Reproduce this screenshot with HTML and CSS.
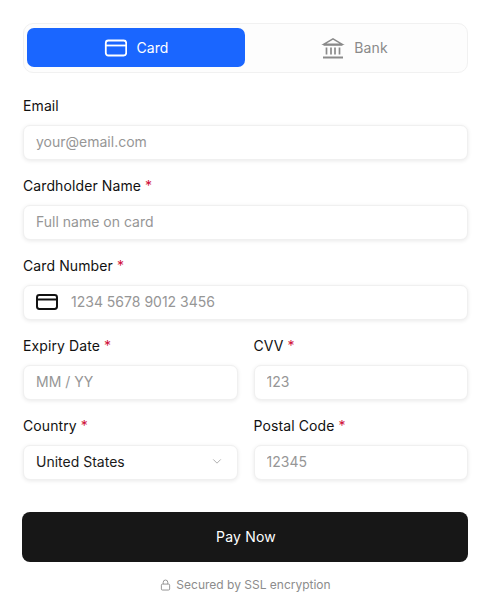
FILE: index.html
```html
<!DOCTYPE html>
<html lang="en">
<head>
    <meta charset="UTF-8">
    <meta name="viewport" content="width=device-width, initial-scale=1.0">
    <title>Payment</title>
    <link rel="stylesheet" href="styles.css">
</head>
<body>
    <form class="checkout">
        <div class="tabs">
            <button type="button" class="tab active">
                <svg class="tab-icon" viewBox="0 0 24 24" fill="none" stroke="currentColor" stroke-width="1.8">
                    <rect x="2.8" y="4.5" width="20.4" height="15" rx="2.5"/>
                    <path d="M2.8 9.5h20.4"/>
                </svg>
                Card
            </button>
            <button type="button" class="tab">
                <svg class="tab-icon bank" viewBox="0 0 24 24" fill="none" stroke="currentColor" stroke-width="1.5">
                    <path d="M3 8.2 12 2.8l9 5.4z"/>
                    <path d="M2.5 9h19" stroke-width="1.6"/>
                    <path d="M5.5 11.5v7M10 11.5v7M14 11.5v7M18.5 11.5v7" stroke-width="1.7"/>
                    <path d="M2 21.5h20" stroke-width="2"/>
                </svg>
                Bank
            </button>
        </div>

        <div class="field">
            <label class="label">Email</label>
            <input class="input" type="text" placeholder="your@email.com">
        </div>

        <div class="field">
            <label class="label">Cardholder Name <span class="req">*</span></label>
            <input class="input" type="text" placeholder="Full name on card">
        </div>

        <div class="field">
            <label class="label">Card Number <span class="req">*</span></label>
            <div class="input input-icon">
                <svg class="card-icon" viewBox="0 0 22 16" fill="none" stroke="#111" stroke-width="2">
                    <rect x="1" y="1" width="20" height="14" rx="2.4"/>
                    <path d="M1 5.5h20"/>
                </svg>
                <input class="bare" type="text" placeholder="1234 5678 9012 3456">
            </div>
        </div>

        <div class="row">
            <div class="field">
                <label class="label">Expiry Date <span class="req">*</span></label>
                <input class="input" type="text" placeholder="MM / YY">
            </div>
            <div class="field">
                <label class="label">CVV <span class="req">*</span></label>
                <input class="input" type="text" placeholder="123">
            </div>
        </div>

        <div class="row">
            <div class="field">
                <label class="label">Country <span class="req">*</span></label>
                <div class="input select">
                    <span>United States</span>
                    <svg class="chevron" viewBox="0 0 12 8" fill="none" stroke="#b0b0b0" stroke-width="1.2">
                        <path d="M1.5 1.5 6 6l4.5-4.5"/>
                    </svg>
                </div>
            </div>
            <div class="field">
                <label class="label">Postal Code <span class="req">*</span></label>
                <input class="input" type="text" placeholder="12345">
            </div>
        </div>

        <button type="button" class="pay">Pay Now</button>

        <p class="secure">
            <svg class="lock" viewBox="0 0 12 13" fill="none" stroke="#8c8c8c" stroke-width="1">
                <rect x="1.5" y="5.5" width="9" height="6.5" rx="1.2"/>
                <path d="M3.5 5.5V3.6a2.5 2.5 0 0 1 5 0v1.9"/>
            </svg>
            Secured by SSL encryption
        </p>
    </form>
</body>
</html>
```

FILE: styles.css
```css
* {
    box-sizing: border-box;
}
body {
    margin: 0;
    background-color: #fff;
    font-family: Inter, "Liberation Sans", sans-serif;
    color: #1a1a1a;
}
.checkout {
    width: 491px;
    padding: 23px 23px 0 23px;
}
.tabs {
    display: flex;
    height: 50px;
    padding: 4px 0 5px 3px;
    background-color: #fdfdfd;
    border: 1px solid #f1f1f1;
    border-radius: 10px;
    margin-bottom: 24px;
}
.tab {
    flex: 1;
    display: flex;
    align-items: center;
    justify-content: center;
    gap: 9px;
    padding: 0 3px 0 0;
    border: none;
    background: none;
    border-radius: 7px;
    font-family: inherit;
    font-size: 14px;
    font-weight: 400;
    letter-spacing: 0.1px;
    color: #8a8a8a;
}
.tab.active {
    flex: 0 0 218px;
    padding: 0;
    background-color: #1a66ff;
    color: #fff;
}
.tab-icon {
    width: 24px;
    height: 24px;
}
.field {
    flex: 1;
    min-width: 0;
    display: flex;
    flex-direction: column;
    margin-bottom: 17px;
}
.label {
    height: 20px;
    margin-bottom: 8px;
    font-size: 14px;
    font-weight: 400;
    line-height: 18px;
    letter-spacing: 0.1px;
    color: #111;
}
.req {
    color: #d0103a;
}
.input {
    width: 100%;
    height: 35px;
    padding: 0 12px 2px 12px;
    background-color: #fff;
    border: 1px solid #f0f0f0;
    border-radius: 7px;
    box-shadow: 0 1px 4px rgba(0,0,0,0.09);
    font-family: inherit;
    font-size: 14px;
    color: #1a1a1a;
}
.input::placeholder,
.bare::placeholder {
    color: #969696;
    opacity: 1;
}
.input-icon {
    display: flex;
    align-items: center;
    gap: 13px;
}
.card-icon {
    width: 22px;
    height: 16px;
    flex-shrink: 0;
}
.bare {
    flex: 1;
    min-width: 0;
    border: none;
    outline: none;
    padding: 0;
    background: none;
    font-family: inherit;
    font-size: 14px;
}
.row {
    display: flex;
    gap: 16px;
}
.select {
    display: flex;
    align-items: center;
    justify-content: space-between;
}
.chevron {
    width: 10px;
    height: 7px;
    margin-right: 3px;
}
.pay {
    display: block;
    width: 446px;
    height: 50px;
    margin: 15px 0 0 -1px;
    padding: 0 0 2px 2px;
    border: none;
    border-radius: 8px;
    background-color: #171717;
    color: #fff;
    font-family: inherit;
    font-size: 14px;
    font-weight: 400;
    letter-spacing: 0.2px;
}
.secure {
    display: flex;
    align-items: center;
    justify-content: center;
    gap: 5px;
    margin: 14px 0 0 0;
    font-size: 12px;
    line-height: 18px;
    color: #8c8c8c;
}
.lock {
    width: 11px;
    height: 12px;
}
```
